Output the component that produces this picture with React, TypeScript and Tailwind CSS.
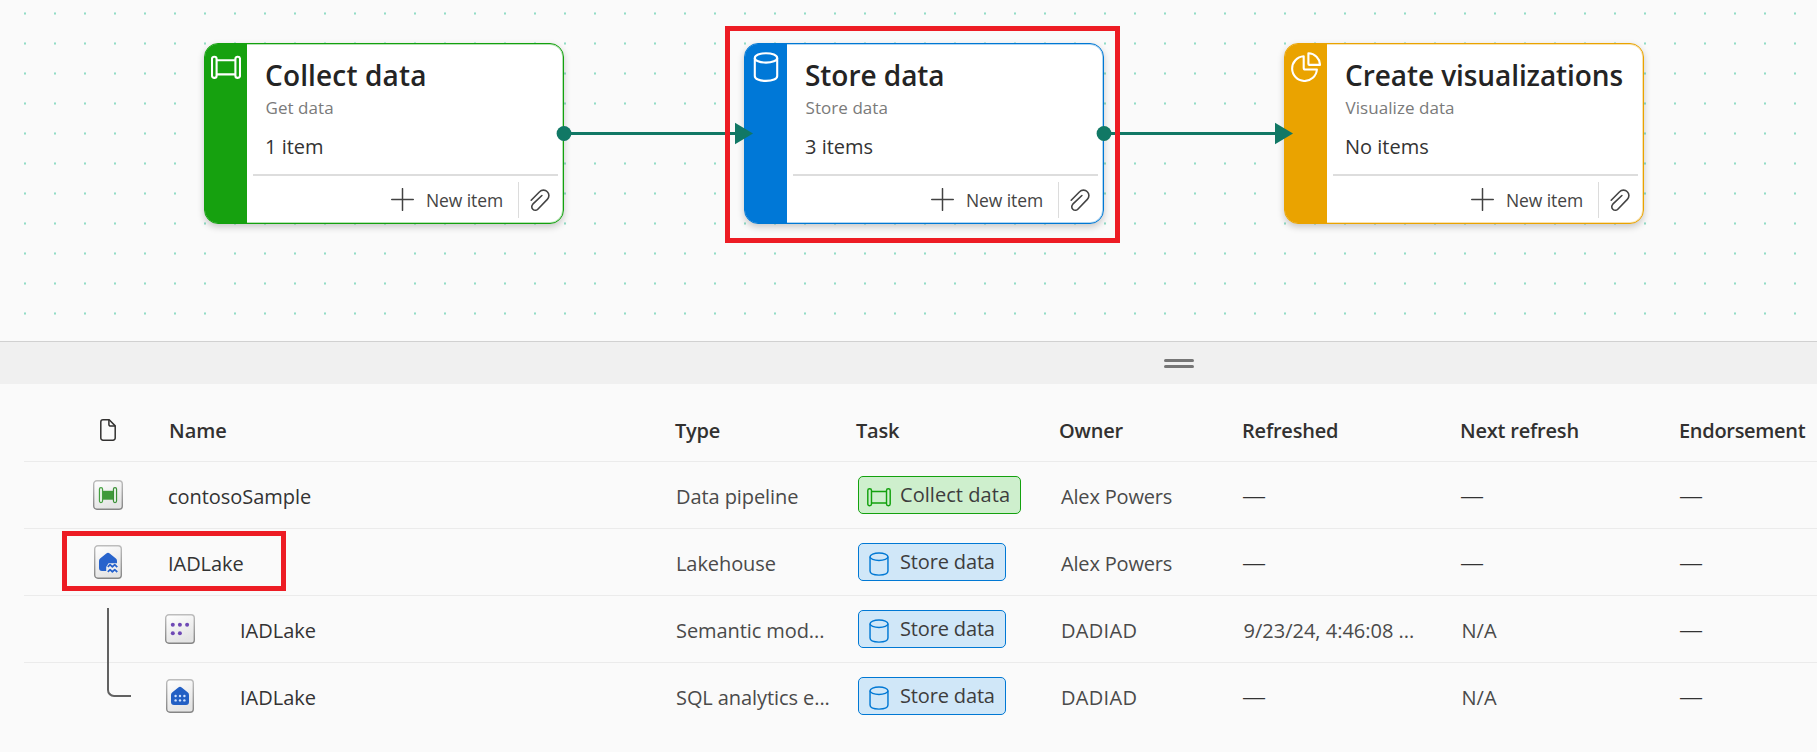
import type { ReactNode } from "react";

type Kind = "collect" | "store" | "visualize";

function PipelineGlyph({ className, stroke = 2.1 }: { className?: string; stroke?: number }) {
  return (
    <svg viewBox="0 0 30 30" className={className} fill="none" stroke="currentColor" strokeWidth={stroke}>
      <rect x="1" y="4.7" width="4.6" height="21.2" rx="2.2" />
      <rect x="24.4" y="4.7" width="4.6" height="21.2" rx="2.2" />
      <path d="M5.6 8.2h18.8M5.6 22.4h18.8" />
    </svg>
  );
}

function DatabaseGlyph({ className, stroke = 2.1 }: { className?: string; stroke?: number }) {
  return (
    <svg viewBox="0 0 30 30" className={className} fill="none" stroke="currentColor" strokeWidth={stroke}>
      <ellipse cx="15" cy="5.9" rx="11.2" ry="4.7" />
      <path d="M3.8 5.9v18c0 3 4.6 5 11.2 5s11.2-2 11.2-5v-18" />
    </svg>
  );
}

function PieGlyph({ className }: { className?: string }) {
  return (
    <svg viewBox="0 0 30 30" className={className} fill="none" stroke="currentColor" strokeWidth="2.1" strokeLinejoin="round">
      <path d="M12.7 4.2A12.4 12.4 0 1 0 25.9 17.5H14.2a1.5 1.5 0 0 1-1.5-1.5z" />
      <path d="M17.4 1.2A11.9 11.9 0 0 1 29 12.9H18.4a1 1 0 0 1-1-1z" />
    </svg>
  );
}

function PlusGlyph() {
  return (
    <svg viewBox="0 0 23 23" className="h-[23px] w-[23px]" fill="none" stroke="#424242" strokeWidth="1.5" strokeLinecap="round">
      <path d="M11.5 .7v21.600M.7 11.5h21.600" />
    </svg>
  );
}

function ClipGlyph() {
  return (
    <svg viewBox="0 0 20 24" className="h-6 w-5" fill="none" stroke="#444" strokeWidth="1.6" strokeLinecap="round" strokeLinejoin="round">
      <path d="M1.200 12.200 9.600 3.800a5.300 5.300 0 0 1 7.700 0 5.300 5.300 0 0 1 0 7.600L7.800 21.200a3.500 3.500 0 0 1-5-5L11.900 7.500" />
    </svg>
  );
}

const nodes: {
  kind: Kind;
  title: string;
  subtitle: string;
  items: string;
  place: string;
  line: string;
  fill: string;
  tracking: string;
}[] = [
  {
    kind: "collect",
    title: "Collect data",
    subtitle: "Get data",
    items: "1 item",
    place: "left-[204px]",
    line: "border-[#13a10e] shadow-[inset_0_0_0_1px_#13a10e50,0_3px_7px_rgba(0,0,0,0.2)]",
    fill: "bg-[#16a10f]",
    tracking: "tracking-[0.15px]",
  },
  {
    kind: "store",
    title: "Store data",
    subtitle: "Store data",
    items: "3 items",
    place: "left-[744px]",
    line: "border-[#0078d4] shadow-[inset_0_0_0_1px_#0078d450,0_3px_7px_rgba(0,0,0,0.2)]",
    fill: "bg-[#0078d7]",
    tracking: "tracking-[-0.05px]",
  },
  {
    kind: "visualize",
    title: "Create visualizations",
    subtitle: "Visualize data",
    items: "No items",
    place: "left-[1284px]",
    line: "border-[#eaa300] shadow-[inset_0_0_0_1px_#eaa30050,0_3px_7px_rgba(0,0,0,0.2)]",
    fill: "bg-[#eaa300]",
    tracking: "tracking-[-0.08px]",
  },
];

function TaskCard({ node }: { node: (typeof nodes)[number] }) {
  const icon = "h-[30px] w-[30px]";
  return (
    <div className={`absolute top-[43px] flex h-[181px] w-[360px] overflow-hidden rounded-[14px] border bg-white ${node.place} ${node.line}`}>
      <div className={`flex w-[42px] justify-center pt-2 text-white ${node.fill}`}>
        {node.kind === "collect" && <PipelineGlyph className={icon} />}
        {node.kind === "store" && <DatabaseGlyph className={icon} />}
        {node.kind === "visualize" && <PieGlyph className={icon} />}
      </div>
      <div className="flex flex-1 flex-col whitespace-nowrap pt-3">
        <div className={`pl-[18px] text-[28px] leading-[38px] font-semibold text-[#242424] ${node.tracking}`}>{node.title}</div>
        <div className="mt-[3px] pl-[18.500px] text-[17px] leading-[22px] tracking-[0.06px] text-[#7a7a7a]">{node.subtitle}</div>
        <div className="mt-[14px] pl-[18px] text-[20px] leading-7 text-[#333]">{node.items}</div>
        <div className="mt-[13px] mr-[5px] ml-[6px] h-[2px] bg-[#dddddd]" />
        <div className="flex flex-1 items-center justify-end pr-[13px]">
          <PlusGlyph />
          <span className="mr-[15px] ml-3 pt-px text-[17.500px] tracking-[-0.1px] text-[#444]">New item</span>
          <span className="mr-[11px] h-9 w-px bg-[#dcdcdc]" />
          <ClipGlyph />
        </div>
      </div>
    </div>
  );
}

function Tile({ tall, children }: { tall?: boolean; children: ReactNode }) {
  const w = tall ? 28 : 30;
  const h = tall ? 34 : 30;
  return (
    <svg width={w} height={h} viewBox={`0 0 ${w} ${h}`}>
      <defs>
        <linearGradient id={tall ? "tileTall" : "tileWide"} x1="0" y1="0" x2=".4" y2="1">
          <stop offset="0" stopColor="#fff" />
          <stop offset="1" stopColor="#e4e4e4" />
        </linearGradient>
        <linearGradient id={tall ? "edgeTall" : "edgeWide"} x1="0" y1="0" x2="0" y2="1">
          <stop offset="0" stopColor="#bdbdbd" />
          <stop offset="1" stopColor="#858585" />
        </linearGradient>
      </defs>
      <rect
        x=".7"
        y=".7"
        width={w - 1.4}
        height={h - 1.4}
        rx="3.2"
        fill={tall ? "url(#tileTall)" : "url(#tileWide)"}
        stroke={tall ? "url(#edgeTall)" : "url(#edgeWide)"}
        strokeWidth="1.4"
      />
      {children}
    </svg>
  );
}

const PipelineTile = () => (
  <Tile>
    <path d="M9 10.800h12v8.900H9z" fill="#3f9a3a" />
    <rect x="6.500" y="7.600" width="3" height="15" rx="1.500" fill="#fff" stroke="#459f40" strokeWidth="1.300" />
    <rect x="20.500" y="7.600" width="3" height="15" rx="1.500" fill="#fff" stroke="#3a8f36" strokeWidth="1.300" />
  </Tile>
);

const house = "M12.3 8.4a2.6 2.6 0 0 1 3.4 0l6.2 5.2c.7.6 1.1 1.4 1.1 2.3v7.2a3 3 0 0 1-3 3H8a3 3 0 0 1-3-3v-7.2c0-.9.4-1.7 1.1-2.3z";

const LakeTile = () => (
  <Tile tall>
    <path d={house} fill="#2763cc" />
    <path d="M12.2 22l2.300-3.800h9.300v9.700h-10l-1.600-2z" fill="#efefef" />
    <path
      d="M13.800 21.900l2.300-2.200 2.300 2.200 2.300-2.200 2.600 2.400M13.800 26.800l2.300-2.200 2.300 2.200 2.300-2.200 2.600 2.400"
      fill="none"
      stroke="#2763cc"
      strokeWidth="1.800"
      strokeLinejoin="round"
    />
  </Tile>
);

const SemanticTile = () => (
  <Tile>
    {[7.8, 14.9, 22.1].map((x) => (
      <circle key={x} cx={x} cy="10.8" r="2" fill="#6f49b5" />
    ))}
    {[7.8, 14.9].map((x) => (
      <circle key={x} cx={x} cy="19.2" r="2" fill="#6f49b5" />
    ))}
  </Tile>
);

const SqlTile = () => (
  <Tile tall>
    <path d={house} fill="#225fc4" />
    {[9.6, 14, 18.4].map((x) => (
      <g key={x} fill="#cfe2ff">
        <circle cx={x} cy="17" r="1.2" />
        <circle cx={x} cy="21.4" r="1.2" />
      </g>
    ))}
  </Tile>
);

function TaskBadge({ kind }: { kind: Kind }) {
  const collect = kind === "collect";
  return (
    <span
      className={`ml-px flex h-[38px] items-center gap-[9px] rounded-[5px] border pl-2 text-[#3d3d3d] ${
        collect ? "w-[163px] border-[#13a10e] bg-[#ceefcd]" : "w-[148px] border-[#0078d4] bg-[#d0e7f8]"
      }`}
    >
      {collect ? (
        <PipelineGlyph className="mt-1 h-6 w-6 shrink-0 text-[#13a10e]" stroke={1.8} />
      ) : (
        <DatabaseGlyph className="mt-1 h-6 w-6 shrink-0 text-[#0078d4]" stroke={1.8} />
      )}
      <span className={collect ? "tracking-[0.05px]" : "tracking-[-0.15px]"}>{collect ? "Collect data" : "Store data"}</span>
    </span>
  );
}

const rows: {
  icon: ReactNode;
  name: string;
  child?: boolean;
  type: string;
  task: Kind;
  owner: string;
  refreshed: string;
  next: string;
}[] = [
  { icon: <PipelineTile />, name: "contosoSample", type: "Data pipeline", task: "collect", owner: "Alex Powers", refreshed: "—", next: "—" },
  { icon: <LakeTile />, name: "IADLake", type: "Lakehouse", task: "store", owner: "Alex Powers", refreshed: "—", next: "—" },
  { icon: <SemanticTile />, name: "IADLake", child: true, type: "Semantic mod...", task: "store", owner: "DADIAD", refreshed: "9/23/24, 4:46:08 ...", next: "N/A" },
  { icon: <SqlTile />, name: "IADLake", child: true, type: "SQL analytics e...", task: "store", owner: "DADIAD", refreshed: "—", next: "N/A" },
];

const columns = "grid grid-cols-[144px_507px_182px_202px_182px_218px_219px_1fr] items-center whitespace-nowrap";

function Value({ text }: { text: string }) {
  return text === "—" ? (
    <span className="pl-px text-[24px] leading-7 font-light text-[#333]">—</span>
  ) : (
    <span className="pt-[3px] pl-[2.500px]">{text}</span>
  );
}

export default function App() {
  return (
    <div className="relative flex h-[752px] w-[1817px] flex-col overflow-hidden bg-[#fafafa] font-['Open_Sans',sans-serif]">
      <div className="relative h-[341px] bg-[radial-gradient(circle_at_1px_1.5px,#93dcc6_0.8px,transparent_1.5px)] bg-[length:30px_30px] bg-[position:24px_12px]">
        {nodes.map((n) => (
          <TaskCard key={n.kind} node={n} />
        ))}
        <svg className="absolute top-[120px] left-[550px]" width="760" height="28" viewBox="550 120 760 28" fill="#117865">
          <path d="M564 133.5H736M1104 133.5H1276" stroke="#117865" strokeWidth="3" />
          <circle cx="564" cy="133.5" r="7.4" />
          <circle cx="1104" cy="133.5" r="7.4" />
          <path d="M735 122.800l18 10.700-18 10.700zM1275 122.800l18 10.700-18 10.700z" />
        </svg>
        <div className="absolute top-[26px] left-[725px] h-[217px] w-[395px] border-[5px] border-[#ed1c24]" />
      </div>

      <div className="h-[43px] border-t border-[#d1d1d1] bg-[#f0f0f0] pt-[17px] pl-[1164px]">
        <div className="flex w-[30px] flex-col gap-[3px]">
          <span className="h-[3px] rounded-full bg-[#767676]" />
          <span className="h-[3px] rounded-full bg-[#767676]" />
        </div>
      </div>

      <div className="ml-6 text-[20px] leading-7 text-[#4a4a4a]">
        <div className={`${columns} h-[78px] border-b border-[#ebebeb] pt-[17px] font-semibold tracking-[-0.2px] text-[#323130]`}>
          <svg className="-mt-[2px] ml-[76px]" width="16" height="22" viewBox="0 0 16 22" fill="none" stroke="#323130" strokeWidth="1.5" strokeLinejoin="round">
            <path d="M3 .8h6.200L15.200 6.900V19a2.200 2.200 0 0 1-2.200 2.200H3A2.200 2.200 0 0 1 .8 19V3A2.200 2.200 0 0 1 3 .8z" />
            <path d="M8.900 .8v4.600a1.700 1.700 0 0 0 1.700 1.700h4.600" />
          </svg>
          <span className="pl-px tracking-normal">Name</span>
          <span>Type</span>
          <span className="-ml-px">Task</span>
          <span>Owner</span>
          <span className="pl-px">Refreshed</span>
          <span className="pl-px">Next refresh</span>
          <span className="pl-px tracking-[-0.3px]">Endorsement</span>
        </div>
        {rows.map((r, i) => (
          <div key={i} className={`${columns} h-[67px] border-b ${i < 3 ? "border-[#ebebeb]" : "border-transparent"}`}>
            <div className={`flex w-[30px] justify-center ${r.child ? "ml-[141px]" : "ml-[69px]"}`}>{r.icon}</div>
            <span className={`pt-[3px] text-[#333] ${r.child ? "pl-[72px]" : "tracking-[-0.05px]"}`}>{r.name}</span>
            <span className="pt-[3px] pl-px tracking-[-0.08px]">{r.type}</span>
            <TaskBadge kind={r.task} />
            <span className={`pt-[3px] pl-[2px] ${r.owner === "DADIAD" ? "tracking-[0.3px]" : "tracking-[-0.18px]"}`}>{r.owner}</span>
            <Value text={r.refreshed} />
            <Value text={r.next} />
            <Value text="—" />
          </div>
        ))}
      </div>

      <div className="absolute top-[608px] left-[107px] h-[89px] w-6 rounded-bl-[7px] border-b-2 border-l-2 border-[#616161]" />
      <div className="absolute top-[531px] left-[62px] h-[60px] w-[224px] border-[5px] border-[#ed1c24]" />
    </div>
  );
}
